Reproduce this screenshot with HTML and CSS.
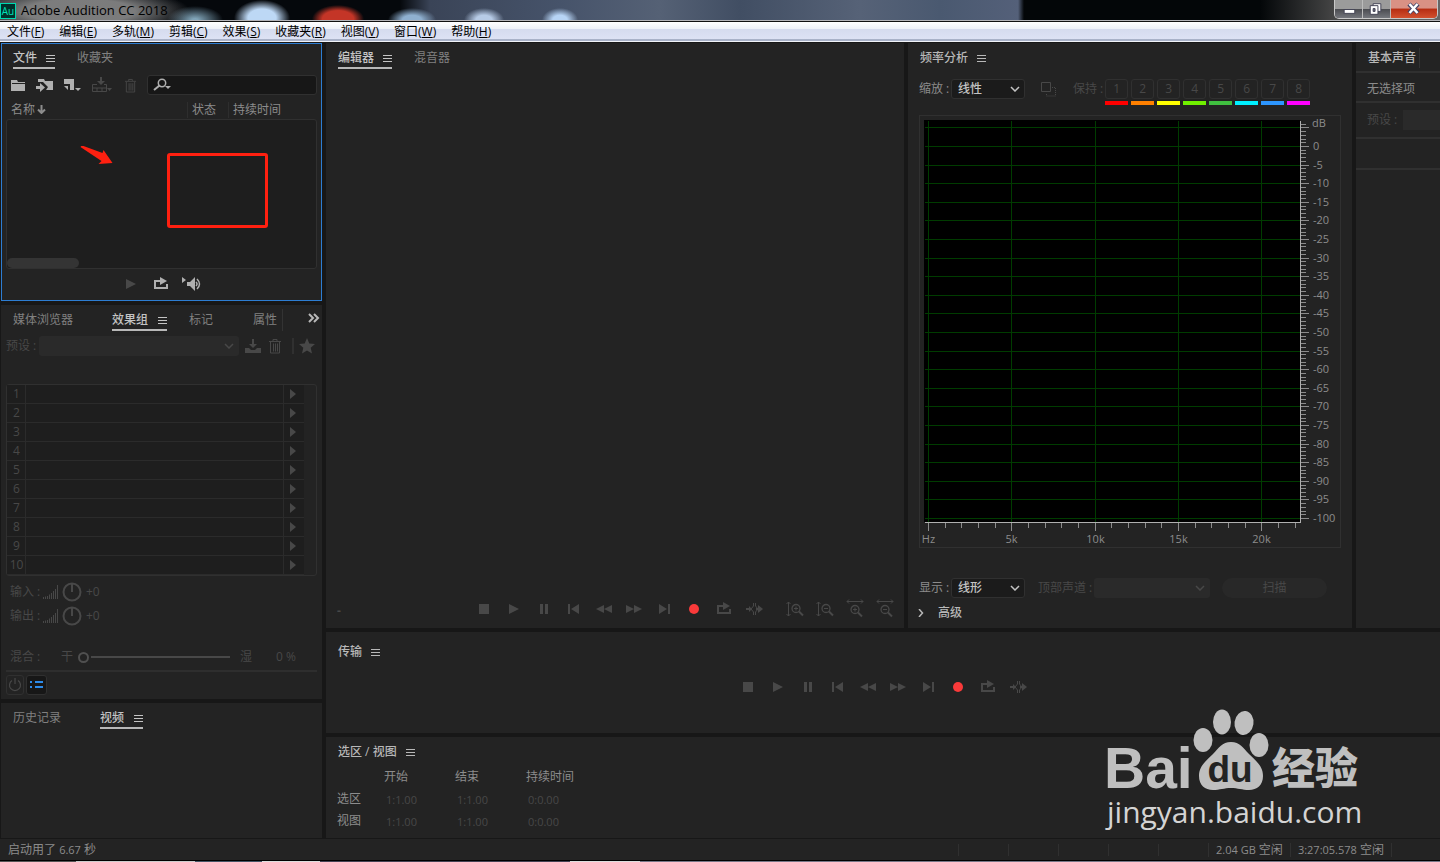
FILE: index.html
```html
<!DOCTYPE html>
<html lang="zh-CN">
<head>
<meta charset="utf-8">
<title>Adobe Audition CC 2018</title>
<link rel="stylesheet" href="styles.css">
</head>
<body>
<svg class="sprite" aria-hidden="true">
  <symbol id="i-menu" viewBox="0 0 9 9"><path d="M0 1.5h9M0 4.5h9M0 7.5h9" stroke="currentColor" fill="none"/></symbol>
  <symbol id="i-chevron" viewBox="0 0 10 6"><path d="M1 1l4 4 4-4" stroke="currentColor" stroke-width="1.5" fill="none"/></symbol>
  <symbol id="i-stop" viewBox="0 0 20 20"><path d="M5 5h10v10H5z"/></symbol>
  <symbol id="i-play" viewBox="0 0 20 20"><path d="M5 5l10 5-10 5z"/></symbol>
  <symbol id="i-pause" viewBox="0 0 20 20"><path d="M6 5h3v10H6zM11 5h3v10h-3z"/></symbol>
  <symbol id="i-start" viewBox="0 0 20 20"><path d="M4 5h2v10H4zM15 5v10l-8-5z"/></symbol>
  <symbol id="i-rew" viewBox="0 0 20 20"><path d="M10 6v8l-8-4zM18 6v8l-8-4z"/></symbol>
  <symbol id="i-ff" viewBox="0 0 20 20"><path d="M2 6v8l8-4zM10 6v8l8-4z"/></symbol>
  <symbol id="i-end" viewBox="0 0 20 20"><path d="M5 5v10l8-5zM14 5h2v10h-2z"/></symbol>
  <symbol id="i-rec" viewBox="0 0 20 20"><circle cx="10" cy="10" r="5"/></symbol>
  <symbol id="i-loop" viewBox="0 0 20 20"><path d="M3 6h6V3l7 4-7 4V8H5v5h10v-3h2v5H3z"/></symbol>
  <symbol id="i-skip" viewBox="0 0 20 20"><path d="M2 9h3V7l3 3-3 3v-2H2zM12 9h2V6l5 4-5 4v-3h-2z"/><path d="M9.500 4v3L7 10l2.500 3v3M11.500 4v3L14 10l-2.500 3v3" fill="none" stroke="currentColor"/></symbol>
  <symbol id="i-glass" viewBox="0 0 14 14"><circle cx="6" cy="5.500" r="4" fill="none" stroke="currentColor" stroke-width="1.300"/><path d="M9 8.500l4 4" stroke="currentColor" stroke-width="2"/></symbol>
  <symbol id="i-vin" viewBox="0 0 20 20"><path d="M3.500 3v14M1.500 5l2-2 2 2M1.500 15l2 2 2-2" fill="none" stroke="currentColor"/><use href="#i-glass" x="5" y="4" width="14" height="14"/><path d="M9 9.500h4M11 7.500v4" stroke="currentColor"/></symbol>
  <symbol id="i-vout" viewBox="0 0 20 20"><path d="M3.500 3v14M1.500 5l2-2 2 2M1.500 15l2 2 2-2" fill="none" stroke="currentColor"/><use href="#i-glass" x="5" y="4" width="14" height="14"/><path d="M9 9.500h4" stroke="currentColor"/></symbol>
  <symbol id="i-hin" viewBox="0 0 20 20"><path d="M2 2.500h16M4 .5l-2 2 2 2M16 .5l2 2-2 2" fill="none" stroke="currentColor"/><use href="#i-glass" x="4" y="5" width="14" height="14"/><path d="M8 10.500h4M10 8.500v4" stroke="currentColor"/></symbol>
  <symbol id="i-hout" viewBox="0 0 20 20"><path d="M2 2.500h16M4 .5l-2 2 2 2M16 .5l2 2-2 2" fill="none" stroke="currentColor"/><use href="#i-glass" x="4" y="5" width="14" height="14"/><path d="M8 10.500h4" stroke="currentColor"/></symbol>
  <symbol id="i-trash" viewBox="0 0 14 16"><path d="M1 3.500h12M5 3V1.500h4V3M2.500 4v11h9V4M5.500 5.500v8M7.500 5.500v8M9.500 5.500v8" fill="none" stroke="currentColor"/></symbol>
  <symbol id="i-level" viewBox="0 0 16 14"><path d="M.5 12v2M2.500 11.500V14M4.500 11v3M6.500 9.500V14M8.500 8v6M10.500 6v8M12.500 4v10M14.500 0v14" stroke="currentColor" fill="none"/></symbol>
  <symbol id="i-knob" viewBox="0 0 20 20"><circle cx="10" cy="10" r="8.500" fill="none" stroke="currentColor" stroke-width="2"/><path d="M10 2v8" stroke="currentColor" stroke-width="2"/></symbol>
</svg>

<header class="titlebar">
  <svg class="app-icon" viewBox="0 0 16 16" aria-hidden="true"><rect x=".5" y=".5" width="15" height="15" fill="#00302b" stroke="#00d8b0"/><text x="8" y="12" text-anchor="middle" class="app-icon-text">Au</text></svg>
  <h1 class="app-title">Adobe Audition CC 2018</h1>
  <div class="win-buttons">
    <button class="win-btn min" aria-label="最小化"><svg viewBox="0 0 28 17"><rect x="9.500" y="8.500" width="11" height="4" fill="#fff" stroke="#445"/></svg></button>
    <button class="win-btn max" aria-label="还原"><svg viewBox="0 0 28 17"><path d="M10.500 2.500h8v8h-8z" fill="#fff" stroke="#445"/><path d="M7.500 4.500h8v9h-8z" fill="#fff" stroke="#445"/><path d="M10.500 7.500h2v3h-2z" fill="#667" stroke="#445"/></svg></button>
    <button class="win-btn close" aria-label="关闭"><svg viewBox="0 0 46 17"><path d="M18 3l9 9M27 3l-9 9" stroke="#446" stroke-width="4.500"/><path d="M18.500 3l8 9M26.500 3l-8 9" stroke="#fff" stroke-width="2.500"/></svg></button>
  </div>
</header>

<nav class="menubar">
  <button>文件(<u>F</u>)</button><button>编辑(<u>E</u>)</button><button>多轨(<u>M</u>)</button><button>剪辑(<u>C</u>)</button><button>效果(<u>S</u>)</button><button>收藏夹(<u>R</u>)</button><button>视图(<u>V</u>)</button><button>窗口(<u>W</u>)</button><button>帮助(<u>H</u>)</button>
</nav>

<main class="workspace">
  <aside class="left">
    <section class="panel files">
      <div class="tabs">
        <button class="tab active">文件<svg class="menu"><use href="#i-menu"/></svg></button>
        <button class="tab">收藏夹</button>
      </div>
      <div class="file-tools">
        <button aria-label="打开文件"><svg width="15" height="13" viewBox="0 0 15 13"><path d="M0 1h6l1 2h7v9H0z"/><path d="M1 4.500h13" stroke="#232323"/></svg></button>
        <button aria-label="导入文件"><svg width="17" height="15" viewBox="0 0 17 15"><path d="M2 1h6l1 2h8v9h-7l2-3-5-5H2z"/><path d="M0 8h4V5l5 4.500L4 14v-3H0z"/></svg></button>
        <button aria-label="新建"><svg width="18" height="15" viewBox="0 0 18 15"><path d="M1 1h10v11H7V6H1zM1 8h4v4z"/><path d="M12 10h6l-3 3z"/></svg></button>
        <button class="off" aria-label="插入多轨"><svg width="21" height="16" viewBox="0 0 21 16"><path d="M8 0h2v4h3L9 8 5 4h3z"/><path d="M5 7.500H.5v7h14v-7H12M.5 11h14M5 11v4M10 11v4" fill="none" stroke="currentColor"/><path d="M15 11h5l-2.500 3z"/></svg></button>
        <button class="off" aria-label="删除"><svg width="13" height="15"><use href="#i-trash"/></svg></button>
        <label class="search"><svg width="19" height="14" viewBox="0 0 19 14"><circle cx="9" cy="5" r="3.700" fill="none" stroke="currentColor" stroke-width="1.500"/><path d="M6.500 7.500L1 12" stroke="currentColor" stroke-width="2"/><path d="M12 8h6l-3 3z"/></svg><input type="text" aria-label="搜索"></label>
      </div>
      <div class="list-head"><span class="c-name">名称<svg width="9" height="9" viewBox="0 0 9 9"><path d="M4.500 0v8M1 4.500l3.500 3.500L8 4.500" fill="none" stroke="currentColor" stroke-width="2"/></svg></span><span class="c-state">状态</span><span class="c-dur">持续时间</span></div>
      <div class="file-list">
        <svg class="mark-arrow" viewBox="0 0 32 20"><path d="M0 1q1-2 3-1l19 7 1-3 9 13-14 1 3-3z"/></svg>
        <div class="mark-box"></div>
        <div class="thumb"></div>
      </div>
      <div class="preview">
        <button class="off" aria-label="播放"><svg width="20" height="20"><use href="#i-play"/></svg></button>
        <button aria-label="循环"><svg width="20" height="20"><use href="#i-loop"/></svg></button>
        <button aria-label="自动播放"><svg width="22" height="16" viewBox="0 0 22 16"><path d="M1 1l4 3-4 3zM6 6h3l5-5v14l-5-5H6z"/><path d="M15 6q2 2 0 4M16 3q5 5 0 10" fill="none" stroke="currentColor" stroke-width="1.500"/></svg></button>
      </div>
    </section>

    <section class="panel rack">
      <div class="tabs rack-tabs">
        <button class="tab">媒体浏览器</button>
        <button class="tab active">效果组<svg class="menu"><use href="#i-menu"/></svg></button>
        <button class="tab">标记</button>
        <button class="tab">属性</button>
        <button class="more" aria-label="更多"><svg width="12" height="10" viewBox="0 0 12 10"><path d="M1 1l4 4-4 4M6 1l4 4-4 4" fill="none" stroke="currentColor" stroke-width="2"/></svg></button>
      </div>
      <div class="preset-row">
        <label for="preset">预设 :</label>
        <span class="select flat"><select id="preset" disabled><option></option></select><svg class="chev"><use href="#i-chevron"/></svg></span>
        <button aria-label="保存预设"><svg width="16" height="16" viewBox="0 0 16 16"><path d="M7 1h2v5h3l-4 4-4-4h3zM0 10h4l2 2h4l2-2h4v5H0z"/></svg></button>
        <button aria-label="删除预设"><svg width="14" height="16"><use href="#i-trash"/></svg></button>
        <button class="fav" aria-label="收藏"><svg width="16" height="16" viewBox="0 0 16 16"><path d="M8 0l2.300 5.400 5.700.5-4.300 3.900L13 15.500 8 12.400l-5 3.100 1.300-5.700L0 5.900l5.700-.5z"/></svg></button>
      </div>
      <ol class="slots" id="slots"></ol>
      <div class="gain"><span>输入 :</span><svg class="lvl"><use href="#i-level"/></svg><svg class="knob"><use href="#i-knob"/></svg><span>+0</span></div>
      <div class="gain"><span>输出 :</span><svg class="lvl"><use href="#i-level"/></svg><svg class="knob"><use href="#i-knob"/></svg><span>+0</span></div>
      <div class="mix"><label for="mix">混合 :</label><span>干</span><input id="mix" type="range" min="0" max="100" value="0" disabled><span>湿</span><output for="mix">0 %</output></div>
      <div class="rack-foot">
        <button aria-label="电源"><svg width="14" height="14" viewBox="0 0 14 14"><path d="M4 2.500a5.500 5.500 0 1 0 6 0M7 0v6" fill="none" stroke="currentColor" stroke-width="1.200"/></svg></button>
        <button class="on" aria-label="列表"><svg width="14" height="8" viewBox="0 0 14 8"><path d="M0 0h2v2H0zM5 0h8v2H5zM0 5h2v2H0zM5 5h8v2H5z"/></svg></button>
      </div>
    </section>

    <section class="panel video">
      <div class="tabs video-tabs">
        <button class="tab">历史记录</button>
        <button class="tab active">视频<svg class="menu"><use href="#i-menu"/></svg></button>
      </div>
    </section>
  </aside>

  <div class="right">
    <div class="top">
      <section class="panel editor">
        <div class="tabs">
          <button class="tab active">编辑器<svg class="menu"><use href="#i-menu"/></svg></button>
          <button class="tab">混音器</button>
        </div>
        <div class="editor-foot">
          <span class="timecode">-</span>
          <div class="transport"></div>
          <div class="zooms">
            <button aria-label="放大振幅"><svg><use href="#i-vin"/></svg></button><button aria-label="缩小振幅"><svg><use href="#i-vout"/></svg></button><button aria-label="放大时间"><svg><use href="#i-hin"/></svg></button><button aria-label="缩小时间"><svg><use href="#i-hout"/></svg></button>
          </div>
        </div>
      </section>

      <section class="panel freq">
        <div class="tabs"><button class="tab plain">频率分析<svg class="menu"><use href="#i-menu"/></svg></button></div>
        <div class="row">
          <label for="scale">缩放 :</label>
          <span class="select"><select id="scale"><option>线性</option></select><svg class="chev"><use href="#i-chevron"/></svg></span>
          <button class="copy" aria-label="复制"><svg width="15" height="15" viewBox="0 0 15 15"><path d="M.5 .5h9v9h-9z" fill="none" stroke="currentColor"/><path d="M11 5.500h3.500v8.500h-9V11" fill="none" stroke="currentColor" stroke-dasharray="1 1"/></svg></button>
          <span class="dim">保持 :</span>
          <div class="holds" id="holds"></div>
        </div>
        <div class="chart"><svg id="plot" viewBox="0 0 420 431"></svg></div>
        <div class="row">
          <label for="display">显示 :</label>
          <span class="select"><select id="display"><option>线形</option></select><svg class="chev"><use href="#i-chevron"/></svg></span>
          <label class="dim top-label" for="channel">顶部声道 :</label>
          <span class="select flat channel"><select id="channel" disabled><option></option></select><svg class="chev"><use href="#i-chevron"/></svg></span>
          <button class="scan" disabled>扫描</button>
        </div>
        <button class="advanced"><svg width="6" height="8" viewBox="0 0 6 8"><path d="M1 0l3.500 4L1 8" fill="none" stroke="currentColor" stroke-width="1.500"/></svg>高级</button>
      </section>

      <section class="panel sound">
        <h2>基本声音</h2>
        <p>无选择项</p>
        <div class="sound-preset"><span>预设 :</span><i></i></div>
        <div class="sound-gap"></div>
      </section>
    </div>

    <section class="panel">
      <div class="tabs transport-head"><button class="tab plain">传输<svg class="menu"><use href="#i-menu"/></svg></button></div>
      <div class="transport centered"></div>
    </section>

    <section class="panel selview">
      <div class="tabs"><button class="tab plain">选区 / 视图<svg class="menu"><use href="#i-menu"/></svg></button></div>
      <table>
        <tr><td></td><th>开始</th><th>结束</th><th>持续时间</th></tr>
        <tr><th>选区</th><td>1:1.00</td><td>1:1.00</td><td>0:0.00</td></tr>
        <tr><th>视图</th><td>1:1.00</td><td>1:1.00</td><td>0:0.00</td></tr>
      </table>
    </section>
  </div>
</main>

<footer class="status">
  <span class="msg">启动用了 <span class="num">6.67</span> 秒</span>
  <i></i><i></i><i></i><i></i><i></i>
  <span class="mem"><span class="num">2.04 GB</span> 空闲</span>
  <span class="disk"><span class="num">3:27:05.578</span> 空闲</span>
</footer>
<div class="desktop-edge"></div>

<svg class="watermark" viewBox="0 0 260 128" aria-label="Baidu 经验">
  <g fill="#bfbfbf">
    <text x="0" y="80" class="wm-bai">Bai</text>
    <ellipse cx="99" cy="32" rx="9.500" ry="12"/><ellipse cx="118" cy="14" rx="9" ry="12.500"/><ellipse cx="140" cy="15" rx="9.500" ry="12" transform="rotate(8 140 15)"/><ellipse cx="155" cy="37" rx="9.500" ry="12"/>
    <path d="M127 34c9 0 12 6 18 12 7 7 14 12 14 22 0 9-6 14-14 14-7 0-11-2-18-2s-11 2-18 2c-8 0-14-5-14-14 0-10 7-15 14-22 6-6 9-12 18-12z"/>
    <text x="168" y="76" class="wm-jy">经验</text>
  </g>
  <text x="126" y="74" text-anchor="middle" class="wm-du">du</text>
  <text x="3" y="115" class="wm-url">jingyan.baidu.com</text>
</svg>
<script src="app.js"></script>
</body>
</html>
```
FILE: styles.css
```css
* { box-sizing: border-box; }
body {
  margin: 0; height: 100vh; display: flex; flex-direction: column; overflow: hidden;
  background: #171717; color: #8c8c8c;
  font: 12px/16px "Open Sans", "Noto Sans CJK SC", sans-serif;
}
button { border: 0; margin: 0; padding: 0; background: none; color: inherit; font: inherit; }
svg { fill: currentColor; flex: none; }
ol, p, h1, h2 { margin: 0; padding: 0; font: inherit; list-style: none; }
.sprite { position: absolute; width: 0; height: 0; }

.titlebar {
  height: 22px; flex: none; display: flex; align-items: flex-start; color: #000;
  border-bottom: 1px solid #111; box-shadow: inset 0 -1px #b4b4b8;
  background:
    radial-gradient(ellipse 110px 24px at 80px 11px, #8a8a8ae0 50%, transparent),
    radial-gradient(ellipse 28px 14px at 195px 20px, #80a4b8 10%, transparent),
    radial-gradient(ellipse 28px 18px at 262px 18px, #bdd8f5 50%, transparent),
    radial-gradient(ellipse 26px 14px at 338px 19px, #c43527 60%, transparent),
    radial-gradient(ellipse 24px 12px at 412px 20px, #8fb0d0 40%, transparent),
    radial-gradient(ellipse 20px 12px at 484px 20px, #b7cbe6 40%, transparent),
    radial-gradient(ellipse 18px 12px at 560px 20px, #b7d4f5 40%, transparent),
    linear-gradient(90deg, #202327 0, #05080c 180px, #05080c 400px, #3a4457 430px, #46536a 560px, #556175 660px, #414e63 740px, #566277 860px, #4a5970 940px, #546079 1018px, #030608 1024px, #030608 1260px, #4a4a4a 1340px, #666);
}
.app-icon { width: 16px; height: 16px; margin-top: 3px; }
.app-icon-text { font: 10px "Open Sans", sans-serif; fill: #00e0b8; }
.app-title { margin-left: 5px; font-size: 13px; line-height: 21px; flex: 1; }
.win-buttons { display: flex; height: 19px; margin-right: 2px; border: 1px solid #c8c8c8; border-top: 0; border-radius: 0 0 5px 5px; overflow: hidden; }
.win-btn { width: 28px; background: linear-gradient(#9b9b9b 0 48%, #4a4b50 50%, #74767c); border-right: 1px solid #bbb; }
.win-btn svg { display: block; width: 100%; height: 17px; }
.win-btn.close { width: 46px; border: 0; background: linear-gradient(#d99184 0 45%, #b62d12 50%, #d2502e); }

.menubar {
  height: 20px; flex: none; display: flex; gap: 15px; padding: 0 7px; color: #000; line-height: 20px;
  background: linear-gradient(#fff, #eef1f8 35%, #d5dbee 36%, #dde2f4 90%, #a9b2c8 91%); border-bottom: 1px solid #f0f2f8;
}

.workspace { flex: 1; min-height: 0; display: grid; grid-template-columns: 321px minmax(0, 1fr); gap: 4px; padding: 1px 0 1px 1px; }
.left { display: grid; grid-template-rows: 258px minmax(0, 1fr) 135px; gap: 4px; min-height: 0; }
.right { display: grid; grid-template-rows: minmax(0, 1fr) 101px 101px; gap: 4px; min-height: 0; }
.top { display: grid; grid-template-columns: minmax(0, 1fr) 444px 84px; gap: 4px; min-height: 0; }
.panel { background: #232323; min-width: 0; overflow: hidden; }

.tabs { display: flex; height: 26px; padding: 4px 12px 0; gap: 22px; align-items: flex-start; }
.tab { display: flex; align-items: center; gap: 9px; height: 22px; color: #808080; white-space: nowrap; }
.tab.active { color: #c4c4c4; border-bottom: 2px solid #b8b8b8; padding-top: 2px; font-weight: 500; }
.tab.plain { color: #b8b8b8; font-weight: 500; }
.menu { width: 9px; height: 9px; }

.files { border: 1px solid #2d7dd2; padding: 0 4px; }
.files .tabs { padding: 3px 7px 0; }
.file-tools { display: flex; align-items: center; height: 20px; margin-top: 5px; padding-left: 5px; color: #b0b0b0; }
.file-tools button { display: flex; margin-right: 11px; }
.file-tools button:first-child { margin-right: 10px; }
.file-tools button:nth-child(2) { margin-right: 10px; }
.file-tools button:nth-child(5) { margin-right: 10px; }
.off, .file-tools .off { color: #484848; }
.search { flex: 1; min-width: 0; display: flex; align-items: center; height: 20px; padding-left: 5px; background: #171717; border: 1px solid #303030; border-radius: 3px; }
.search input { flex: 1; min-width: 0; border: 0; background: none; color: #bbb; outline: 0; }
.list-head { display: grid; grid-template-columns: 180px 41px 1fr; line-height: 16px; margin: 7px 0 1px; padding-left: 1px; }
.list-head span { padding-left: 4px; }
.list-head span + span { border-left: 1px solid #2e2e2e; }
.list-head svg { margin-left: 2px; }
.file-list { position: relative; height: 150px; background: #1e1e1e; border: 1px solid #303030; border-radius: 3px; }
.mark-arrow { position: absolute; left: 73px; top: 26px; width: 33px; height: 20px; color: #ff2010; }
.mark-box { position: absolute; left: 160px; top: 33px; width: 101px; height: 75px; border: 3px solid #ff2010; border-radius: 3px; }
.thumb { position: absolute; left: 0; bottom: 0; width: 72px; height: 10px; background: #343434; border-radius: 5px; }
.preview { display: flex; justify-content: center; align-items: center; gap: 10px; height: 30px; color: #b0b0b0; }
.preview button { display: flex; }

.rack { color: #484848; display: flex; flex-direction: column; padding: 0 5px; }
.rack .tabs { padding: 4px 0 0 7px; gap: 0; flex: none; }
.rack-tabs .tab:nth-child(1) { margin-right: 39px; }
.rack-tabs .tab:nth-child(2) { margin-right: 22px; gap: 10px; }
.rack-tabs .tab:nth-child(3) { margin-right: 40px; }
.rack-tabs .tab:nth-child(4) { border-right: 1px solid #333; padding-right: 5px; }
.more { margin-left: auto; height: 20px; color: #b8b8b8; margin-right: -3px; }
.preset-row { display: flex; align-items: center; height: 20px; margin-top: 5px; flex: none; }
.preset-row label { width: 33px; white-space: nowrap; line-height: 20px; }
.preset-row .select { width: 200px; }
.preset-row button { display: flex; margin-left: 6px; }
.preset-row button + button { margin-left: 7px; }
.preset-row .fav { margin-left: 10px; padding-left: 5px; border-left: 2px solid #303030; }
.select { position: relative; display: inline-flex; align-items: center; width: 74px; height: 20px; flex: none; }
.select select { width: 100%; height: 20px; padding: 0 6px; appearance: none; border: 1px solid #303030; border-radius: 3px; background: #1b1b1b; color: #c4c4c4; font: inherit; font-weight: 500; opacity: 1; }
.select.flat select { border: 0; background: #2a2a2a; }
.chev { position: absolute; right: 5px; width: 10px; height: 6px; color: #c4c4c4; pointer-events: none; }
.flat .chev { color: #484848; }
.slots { flex: none; margin-top: 28px; padding-right: 12px; border: 1px solid #303030; border-radius: 3px; }
.slots li { display: grid; grid-template-columns: 19px 1fr 21px; height: 19px; background: #1e1e1e; border-bottom: 1px solid #2b2b2b; line-height: 18px; }
.slots span { text-align: center; padding-left: 1px; border-right: 1px solid #2b2b2b; white-space: nowrap; }
.slots button { border-left: 1px solid #2b2b2b; display: flex; align-items: center; padding-left: 6px; }
.slots svg { width: 6px; height: 10px; }
.gain { display: flex; align-items: center; height: 24px; padding-left: 4px; flex: none; }
.slots + .gain { margin-top: 4px; }
.gain span:first-child { width: 33px; white-space: nowrap; }
.lvl { width: 16px; height: 14px; }
.knob { width: 20px; height: 20px; margin: 0 4px 0 3px; }
.mix { display: flex; align-items: center; height: 20px; margin-top: 19px; padding-left: 4px; flex: none; white-space: nowrap; }
.mix label { width: 51px; }
.mix input { appearance: none; width: 152px; height: 12px; margin: 0 10px 0 5px; background: linear-gradient(#484848, #484848) 13px 5px / 100% 2px no-repeat; }
.mix input::-webkit-slider-thumb { appearance: none; width: 11px; height: 11px; border: 2px solid #505050; border-radius: 50%; background: #232323; }
.mix output { margin-left: 24px; }
.rack-foot { display: flex; gap: 2px; margin-top: 3px; padding-top: 3px; border-top: 2px solid #2e2e2e; flex: none; }
.rack-foot button { display: flex; align-items: center; justify-content: center; width: 18px; height: 20px; border: 1px solid #303030; border-radius: 3px; }
.rack-foot .on { width: 21px; background: #171717; color: #2d8ceb; }
.video-tabs { gap: 39px; }
.video-tabs .tab { gap: 10px; }

.editor { display: flex; flex-direction: column; }
.editor-foot { margin-top: auto; display: flex; align-items: center; height: 38px; padding: 0 4px 0 11px; color: #484848; }
.timecode { margin-right: auto; padding-top: 4px; font-weight: 700; }
.transport, .zooms { display: flex; color: #484848; }
.transport button, .zooms button { width: 30px; height: 20px; display: flex; align-items: center; justify-content: center; }
.transport svg, .zooms svg { width: 20px; height: 20px; }
.transport .rec { color: #f93a3a; }
.zooms { margin-left: 11px; }
.centered { justify-content: center; margin-top: 10px; }
.transport-head { padding-top: 9px; height: 35px; }

.row { display: flex; align-items: center; height: 20px; margin: 10px 0 16px; padding-left: 11px; white-space: nowrap; }
.row > label:first-child { width: 32px; }
.dim { color: #484848; }
.copy { display: flex; margin: 0 17px 0 16px; color: #484848; }
.row .dim + .holds { margin-left: 2px; }
.holds { display: flex; gap: 3px; height: 20px; }
.holds button { width: 23px; height: 26px; color: #484848; border-bottom: 4px solid; padding-bottom: 2px; }
.holds span { display: block; height: 20px; line-height: 18px; border: 1px solid #303030; border-radius: 3px; color: #484848; }
.chart { width: 422px; margin: 0 0 0 11px; border: 1px solid #303030; }
.chart svg { display: block; width: 100%; }
.chart text { font: 11px "Open Sans", sans-serif; fill: #8c8c8c; }
.freq .chart + .row { margin: 30px 0 0; }
.row .top-label { width: 56px; margin-left: 13px; }
.channel { width: 116px; }
.scan { width: 105px; height: 20px; margin-left: 12px; border-radius: 10px; background: #282828; color: #484848; }
.advanced { display: flex; align-items: center; gap: 14px; margin: 7px 0 0 10px; color: #b8b8b8; font-weight: 500; }

.sound h2 { width: 64px; margin-top: 5px; line-height: 20px; padding-left: 12px; border-right: 1px solid #333; color: #b8b8b8; font-weight: 500; white-space: nowrap; }
.sound p { margin-top: 3px; padding-left: 11px; line-height: 28px; height: 32px; border: solid #303030; border-width: 2px 0; padding-top: 2px; }
.sound-preset { display: flex; align-items: center; height: 36px; padding-left: 11px; color: #484848; white-space: nowrap; border-bottom: 2px solid #303030; }
.sound-preset span { width: 36px; }
.sound-preset i { flex: 1; height: 20px; background: #2a2a2a; }
.sound-gap { height: 31px; border-bottom: 2px solid #303030; }

.selview table { border-collapse: collapse; margin: 3px 0 0 10px; }
.selview th { font-weight: 400; text-align: left; color: #8c8c8c; }
.selview tr { height: 22px; }
.selview td, .selview th { padding: 0; width: 71px; white-space: nowrap; font-size: 12px; }
.selview td { color: #484848; font-size: 11px; padding: 2px 0 0 2px; }
.selview tr > :first-child { width: 48px; padding-left: 1px; }

.status { flex: none; height: 21px; display: flex; align-items: center; padding: 0 48px 0 8px; background: #232323; }
.msg { margin-right: auto; }
.num { font-size: 11px; }
.status i { width: 50px; height: 12px; border-left: 1px solid #303030; }
.status .mem, .status .disk { border-left: 1px solid #303030; padding: 0 7px; line-height: 14px; white-space: nowrap; }
.status .disk { border-right: 1px solid #303030; }
.desktop-edge { flex: none; height: 2px; border-top: 1px solid #000; background: linear-gradient(90deg, #555 76px, #ccc 76px 195px, #456 195px 262px, #ddd 262px 320px, #445 320px 570px, #ddd 570px 640px, #778 640px); }

.watermark { position: absolute; right: 76px; bottom: 26px; width: 260px; height: 128px; pointer-events: none; }
.wm-bai { font: bold 57px "Liberation Sans", sans-serif; }
.wm-du { font: bold 37px "Liberation Sans", sans-serif; fill: #232323; }
.wm-jy { font: 900 43px "Noto Sans CJK SC", sans-serif; }
.wm-url { font: 30px "Open Sans", sans-serif; fill: #d4d4d4; }
```
FILE: app.js
```js
const icon = (id) => `<svg><use href="#i-${id}"/></svg>`;

const controls = [
  ['stop', '停止'], ['play', '播放'], ['pause', '暂停'], ['start', '移到开头'], ['rew', '快退'],
  ['ff', '快进'], ['end', '移到结尾'], ['rec', '录制'], ['loop', '循环'], ['skip', '跳过所选']
];
document.querySelectorAll('.transport').forEach((bar) => {
  bar.innerHTML = controls.map(([id, name]) => `<button class="${id}" aria-label="${name}">${icon(id)}</button>`).join('');
});

document.getElementById('slots').innerHTML = Array.from({ length: 10 }, (_, i) =>
  `<li><span>${i + 1}</span><div></div><button aria-label="效果 ${i + 1}"><svg viewBox="0 0 6 10"><path d="M0 0l6 5-6 5z"/></svg></button></li>`).join('');

const colors = ['#ff0000', '#ff8000', '#ffff00', '#70f000', '#40c040', '#00f0ff', '#2d96ff', '#ff00ff'];
document.getElementById('holds').innerHTML = colors.map((c, i) =>
  `<button style="border-color:${c}"><span>${i + 1}</span></button>`).join('');

// Frequency plot: 5 dB rows down to -100, 5 kHz columns up to 22 kHz.
const left = 4, right = 380, top0 = 4, bottom = 406;
const yOf = (db) => Math.round(30 - db * 3.72) + 0.5;
const xOf = (k) => Math.round(8 + k * 16.66) + 0.5;
const line = (x1, y1, x2, y2, c) => `<path d="M${x1} ${y1}L${x2} ${y2}" stroke="${c}"/>`;
const label = (x, y, t, a) => `<text x="${x}" y="${y}" text-anchor="${a}">${t}</text>`;
let out = `<rect x="${left}" y="${top0}" width="${right - left}" height="${bottom - top0}" fill="#000"/>`;
for (let db = 5; db >= -100; db -= 5) {
  out += line(left + 1, yOf(db), right, yOf(db), '#003c00');
  if (db <= 0) out += label(393, yOf(db) + 3.5, db, 'start');
}
for (let k = 0; k <= 20; k += 5) {
  out += line(xOf(k), top0 + 1, xOf(k), bottom, '#003c00');
  out += label(xOf(k), 427, k ? k + 'k' : 'Hz', 'middle');
}
out += label(392, 11, 'dB', 'start');
for (let db = 6; db >= -100; db--) out += line(right, yOf(db), db % 5 ? 386 : 389, yOf(db), '#8c8c8c');
for (let k = 0; k <= 22; k++) out += line(xOf(k), bottom, xOf(k), k % 5 ? 412 : 415, '#8c8c8c');
out += line(right + 0.5, top0 + 1, right + 0.5, bottom, '#b0b0b0') + line(left + 1, bottom + 0.5, right + 1, bottom + 0.5, '#b0b0b0');
document.getElementById('plot').innerHTML = out;
```
